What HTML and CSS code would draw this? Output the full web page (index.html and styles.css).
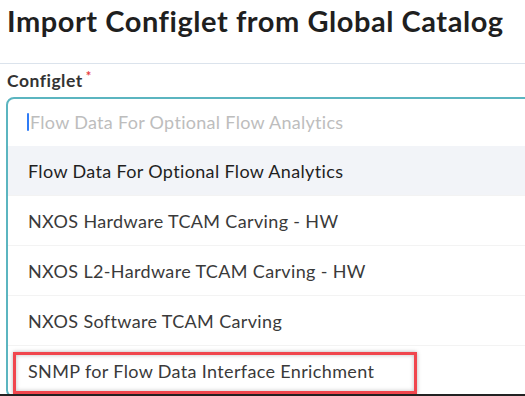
FILE: index.html
```html
<!DOCTYPE html>
<html lang="en">
  <head>
    <meta charset="UTF-8" />
    <meta name="viewport" content="width=device-width, initial-scale=1.0" />
    <title>Import Configlet from Global Catalog</title>
    <link rel="stylesheet" href="styles.css">
  </head>
  <body>
    <h1 class="title">Import Configlet from Global Catalog</h1>
    <div class="divider"></div>

    <div class="field">
      <label class="field-label">Configlet<span class="req">*</span></label>
      <div class="select">
        <div class="search">
          <span class="caret"></span>
          <span class="placeholder">Flow Data For Optional Flow Analytics</span>
        </div>
        <ul class="options">
          <li class="option active">Flow Data For Optional Flow Analytics</li>
          <li class="option">NXOS Hardware TCAM Carving - HW</li>
          <li class="option">NXOS L2-Hardware TCAM Carving - HW</li>
          <li class="option">NXOS Software TCAM Carving</li>
          <li class="option marked">SNMP for Flow Data Interface Enrichment</li>
        </ul>
      </div>
    </div>

    <div class="frame-edge"></div>
  </body>
</html>
```

FILE: styles.css
```css
:root {
  --teal: #5bb5c0;
  --text-dark: #1f1f1f;
  --text: #3a3a3a;
  --muted: #bdbdbd;
  --hover-bg: #f2f4f8;
  --row-line: #f3f3f3;
  --mark: #f0464d;
  --font-family: "Lato", "Noto Sans", sans-serif;
}
* {
  box-sizing: border-box;
  margin: 0;
  padding: 0;
}
html,
body {
  height: 100%;
}
body {
  font-family: var(--font-family);
  background: #fff;
  color: var(--text);
  overflow: hidden;
}
.title {
  font-size: 29px;
  font-weight: 700;
  letter-spacing: 0.55px;
  color: var(--text-dark);
  line-height: 34px;
  padding: 4px 0 0 7px;
  height: 63px;
}
.divider {
  height: 1px;
  background: #dbe3ec;
}
.field {
  padding: 1px 0 0 6px;
}
.field-label {
  display: block;
  font-size: 17.5px;
  font-weight: 700;
  letter-spacing: 0.5px;
  color: #333;
  line-height: 22px;
  padding-left: 1px;
  height: 32px;
}
.req {
  color: #e8403f;
  font-size: 13px;
  vertical-align: 6px;
  margin-left: 3px;
}
.select {
  width: 540px;
  border: 2px solid var(--teal);
  border-radius: 8px;
  overflow: hidden;
}
.search {
  display: flex;
  align-items: center;
  height: 47px;
  padding-left: 19px;
  padding-bottom: 2px;
}
.caret {
  width: 2px;
  height: 18px;
  background: #2f7cf6;
  border-radius: 1px;
  margin-right: 1px;
}
.placeholder {
  font-size: 18px;
  letter-spacing: 0.3px;
  color: var(--muted);
}
.options {
  list-style: none;
}
.option {
  height: 50px;
  line-height: 50px;
  padding-left: 20px;
  font-size: 18px;
  letter-spacing: 0.35px;
  color: var(--text);
  border-bottom: 1px solid var(--row-line);
}
.option.active {
  background: var(--hover-bg);
  color: var(--text-dark);
}
.option.marked {
  position: relative;
}
.option.marked::after {
  content: "";
  position: absolute;
  left: 5px;
  top: 6px;
  width: 398px;
  height: 36px;
  border: 3px solid var(--mark);
  box-shadow: 0 0 4px rgba(0, 0, 0, 0.3), inset 0 0 4px rgba(0, 0, 0, 0.25);
}
.frame-edge {
  position: fixed;
  left: 0;
  right: 0;
  bottom: 0;
  height: 2px;
  background: #222;
}
```
